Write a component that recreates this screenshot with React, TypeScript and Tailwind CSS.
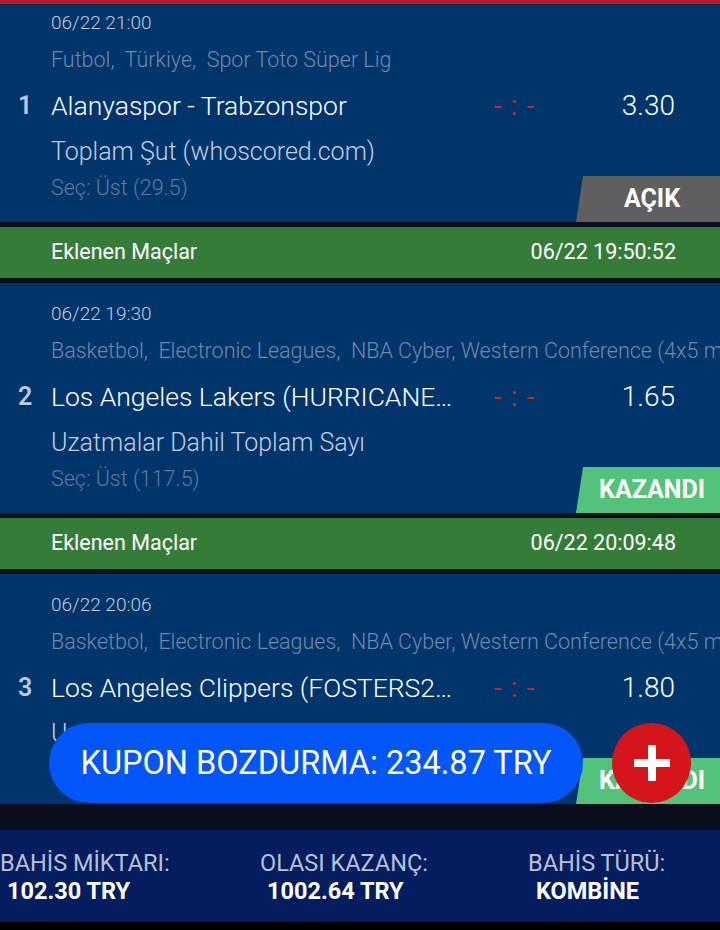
import React from "react";

type Bet = {
  no: number;
  date: string;
  league: string;
  teams: string;
  odds: string;
  market: string;
  pick: string;
  status: "open" | "won";
};

const bets: Bet[] = [
  {
    no: 1,
    date: "06/22 21:00",
    league: "Futbol,  Türkiye,  Spor Toto Süper Lig",
    teams: "Alanyaspor - Trabzonspor",
    odds: "3.30",
    market: "Toplam Şut (whoscored.com)",
    pick: "Seç: Üst (29.5)",
    status: "open",
  },
  {
    no: 2,
    date: "06/22 19:30",
    league: "Basketbol,  Electronic Leagues,  NBA Cyber, Western Conference (4x5 min)",
    teams: "Los Angeles Lakers (HURRICANE) - Golden State Warriors",
    odds: "1.65",
    market: "Uzatmalar Dahil Toplam Sayı",
    pick: "Seç: Üst (117.5)",
    status: "won",
  },
  {
    no: 3,
    date: "06/22 20:06",
    league: "Basketbol,  Electronic Leagues,  NBA Cyber, Western Conference (4x5 min)",
    teams: "Los Angeles Clippers (FOSTERS2K) - Phoenix Suns",
    odds: "1.80",
    market: "Uzatmalar Dahil Toplam Sayı",
    pick: "Seç: Üst (120.5)",
    status: "won",
  },
];

const added = ["06/22 19:50:52", "06/22 20:09:48"];

function BetCard({ bet }: { bet: Bet }) {
  return (
    <div className="relative h-[230px] bg-[#00356b] overflow-hidden">
      <div className="pt-[20px] pl-[51px] text-[19px] leading-[22px] font-light text-[#c3cbd9]">{bet.date}</div>
      <div className="mt-[13px] pl-[51px] text-[21.5px] leading-[26px] font-light text-[#7088ab] whitespace-pre overflow-hidden">
        {bet.league}
      </div>
      <div className="mt-[16px] flex items-center h-[34px]">
        <div className="w-[51px] pl-[18px] text-[25px] font-semibold text-[#bdc8da]">{bet.no}</div>
        <div className="w-[406px] truncate text-[26.5px] font-light text-white">{bet.teams}</div>
        <div className="w-[114px] flex justify-center gap-[9px] text-[28px] leading-none text-[#d0202c]">
          <span>-</span>
          <span>:</span>
          <span>-</span>
        </div>
        <div className="flex-1 text-right pr-[45px] text-[28px] font-light text-white">{bet.odds}</div>
      </div>
      <div className="mt-[13px] pl-[51px] text-[25px] leading-[32px] font-light text-[#c5cee0]">{bet.market}</div>
      <div className="mt-[8px] pl-[51px] text-[21.5px] leading-[24px] font-light text-[#5f789c]">{bet.pick}</div>
      {/* Status badge */}
      <div
        className={`absolute right-0 bottom-0 w-[144px] h-[46px] flex items-center justify-center pl-[8px] text-[25px] font-bold text-white [clip-path:polygon(7px_0,100%_0,100%_100%,0_100%)] ${
          bet.status === "open" ? "bg-[#5f5f5f]" : "bg-[#53c27b]"
        }`}
      >
        {bet.status === "open" ? "AÇIK" : "KAZANDI"}
      </div>
    </div>
  );
}

function AddedBar({ time }: { time: string }) {
  return (
    <div className="my-[5px] h-[51px] bg-[#367c39] flex items-center justify-between pl-[51px] pr-[44px] text-[21.5px] text-white">
      <span>Eklenen Maçlar</span>
      <span>{time}</span>
    </div>
  );
}

export default function App() {
  return (
    <div className="relative w-[720px] h-[930px] bg-black overflow-hidden font-['Roboto',sans-serif]">
      <div className="h-[4px] bg-[#b71c2c]" />
      <div className="h-[826px] bg-[#0a0e1c] overflow-hidden">
        <div className="-mt-[12px]">
          <BetCard bet={bets[0]} />
          <AddedBar time={added[0]} />
          <BetCard bet={bets[1]} />
          <AddedBar time={added[1]} />
          <BetCard bet={bets[2]} />
        </div>
      </div>

      {/* Footer summary */}
      <div className="h-[92px] bg-[#031d5e] flex pt-[19px]">
        <div className="w-[260px]">
          <div className="text-[23.5px] leading-[28px] text-[#b7c1d4]">BAHİS MİKTARI:</div>
          <div className="pl-[7px] text-[23.5px] leading-[28px] font-bold text-white">102.30 TRY</div>
        </div>
        <div className="w-[268px]">
          <div className="text-[23.5px] leading-[28px] text-[#b7c1d4]">OLASI KAZANÇ:</div>
          <div className="pl-[7px] text-[23.5px] leading-[28px] font-bold text-white">1002.64 TRY</div>
        </div>
        <div className="flex-1">
          <div className="text-[23.5px] leading-[28px] text-[#b7c1d4]">BAHİS TÜRÜ:</div>
          <div className="pl-[8px] text-[23.5px] leading-[28px] font-bold text-white">KOMBİNE</div>
        </div>
      </div>

      {/* Floating cash-out button */}
      <button className="absolute left-[49px] top-[723px] w-[534px] h-[80px] rounded-full bg-[#0356f7] text-white text-[32.5px]">
        KUPON BOZDURMA: 234.87 TRY
      </button>
      <button className="absolute left-[612px] top-[723px] w-[79px] h-[80px] rounded-full bg-[#d4161c] flex items-center justify-center">
        <svg width="36" height="36" viewBox="0 0 36 36">
          <rect x="14" y="0" width="8" height="36" fill="#fff" />
          <rect x="0" y="14" width="36" height="8" fill="#fff" />
        </svg>
      </button>
    </div>
  );
}
